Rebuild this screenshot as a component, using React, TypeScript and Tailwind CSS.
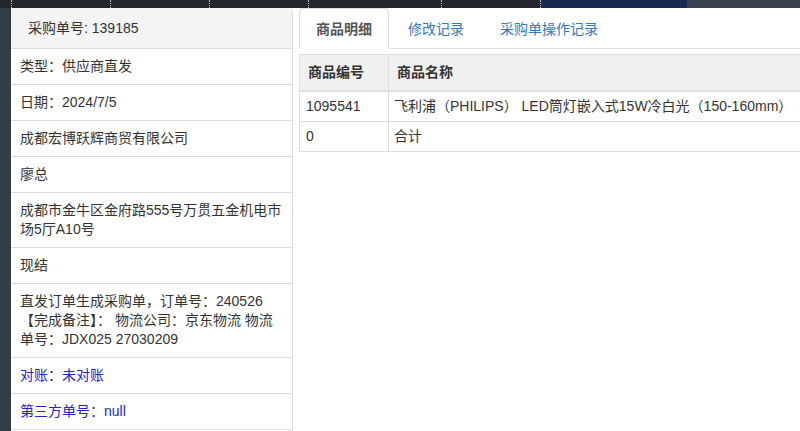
const TOP_SEGMENTS: { w: string; cls: string }[] = [
  { w: "w-[11px]", cls: "bg-[#22262b]" },
  { w: "w-[99px]", cls: "bg-[#22262b] border-l border-dotted border-[#c8c8c8]" },
  { w: "w-[99px]", cls: "bg-[#22262b] border-l border-dotted border-[#c8c8c8]" },
  { w: "w-[99px]", cls: "bg-[#22262b] border-l border-dotted border-[#c8c8c8]" },
  { w: "w-[133px]", cls: "bg-[#22262b] border-l border-dotted border-[#c8c8c8]" },
  { w: "w-[99px]", cls: "bg-[#22262b] border-l border-dotted border-[#c8c8c8]" },
  { w: "w-[147px]", cls: "bg-[#172a4f] border-l border-dotted border-[#c8c8c8]" },
  { w: "flex-1", cls: "bg-[#37414d]" },
];

const INFO_ROWS: { text: string; blue?: boolean }[] = [
  { text: "类型：供应商直发" },
  { text: "日期：2024/7/5" },
  { text: "成都宏博跃辉商贸有限公司" },
  { text: "廖总" },
  { text: "成都市金牛区金府路555号万贯五金机电市场5厅A10号" },
  { text: "现结" },
  { text: "直发订单生成采购单，订单号：240526 【完成备注】： 物流公司：京东物流 物流单号：JDX025 27030209" },
  { text: "对账：未对账", blue: true },
  { text: "第三方单号：null", blue: true },
];

const TABS = ["商品明细", "修改记录", "采购单操作记录"];

export default function App() {
  return (
    <div
      className="w-[800px] h-[431px] overflow-hidden flex flex-col bg-white text-[14px] text-[#333]"
      style={{ fontFamily: '"Liberation Sans", Arial, "Noto Sans CJK SC", sans-serif' }}
    >
      {/* top strip */}
      <div className="h-[8px] flex shrink-0">
        {TOP_SEGMENTS.map((s, i) => (
          <div key={i} className={`${s.w} ${s.cls} h-full`} />
        ))}
      </div>

      <div className="flex flex-1 min-h-0">
        <div className="w-[11px] bg-[#333d48] shrink-0" />

        {/* left info panel */}
        <div className="w-[282px] shrink-0 border-r border-[#ddd] rounded-tr-[3px] flex flex-col">
          <div className="h-[41px] bg-[#f4f4f4] border-b border-[#ddd] flex items-center pl-[17px] rounded-tr-[3px]">
            采购单号: 139185
          </div>
          {INFO_ROWS.map((r) => (
            <div
              key={r.text}
              className={`px-[9px] py-[8px] leading-[19px] border-b border-[#ddd] ${
                r.blue ? "text-[#2424c8]" : ""
              }`}
            >
              {r.text}
            </div>
          ))}
        </div>

        <div className="w-[6px] shrink-0" />

        {/* right detail panel */}
        <div className="flex-1 min-w-0 overflow-hidden">
          <div className="h-[41px] flex border-b border-[#ddd]">
            {TABS.map((t, i) => (
              <div
                key={t}
                className={`h-[41px] mr-[2px] flex items-center rounded-t-[4px] pt-[1px] ${
                  i === 0
                    ? "px-[16px] border border-[#ddd] border-b-white bg-white text-[#555] font-bold"
                    : "px-[17px] text-[#337ab7]"
                }`}
              >
                {t}
              </div>
            ))}
          </div>

          <div className="mt-[5px] w-[560px] border border-[#ddd]">
            <div className="flex h-[37px] bg-[#f0f0f0] border-b-2 border-[#ddd] font-bold">
              <div className="w-[89px] border-r border-[#ddd] pl-[8px] flex items-center">商品编号</div>
              <div className="flex-1 pl-[8px] flex items-center">商品名称</div>
            </div>
            <div className="flex h-[30px] border-b border-[#ddd]">
              <div className="w-[89px] border-r border-[#ddd] pl-[6px] flex items-center">1095541</div>
              <div className="flex-1 pl-[5px] flex items-center whitespace-nowrap">
                飞利浦（PHILIPS） LED筒灯嵌入式15W冷白光（150-160mm）
              </div>
            </div>
            <div className="flex h-[29px]">
              <div className="w-[89px] border-r border-[#ddd] pl-[6px] flex items-center">0</div>
              <div className="flex-1 pl-[5px] flex items-center">合计</div>
            </div>
          </div>
        </div>
      </div>
    </div>
  );
}
